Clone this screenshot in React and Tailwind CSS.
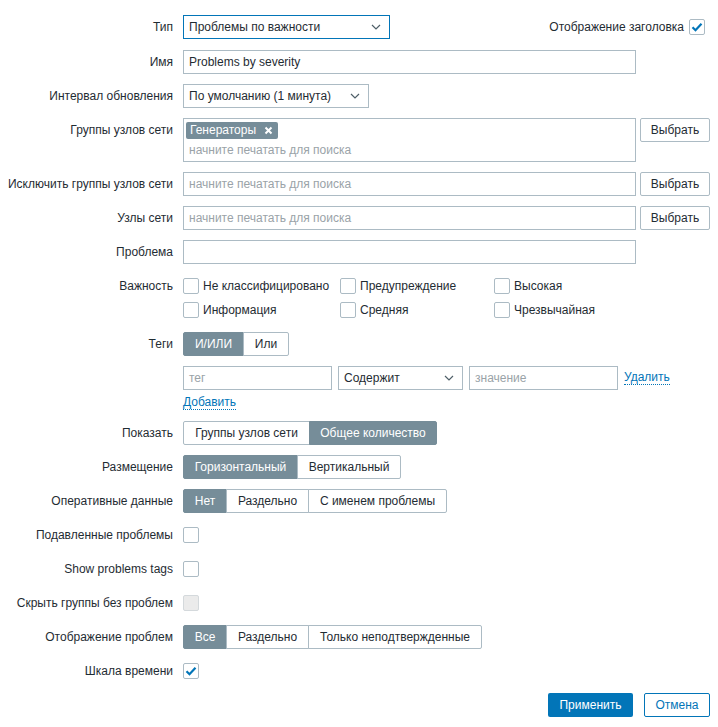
import React from 'react';

const FONT = { fontFamily: '"Liberation Sans", Arial, sans-serif' };

function Chevron() {
  return (
    <svg width="10" height="6" viewBox="0 0 10 6" className="shrink-0">
      <path d="M1 1l4 4 4-4" fill="none" stroke="#4f5f68" strokeWidth="1.2" />
    </svg>
  );
}

function Check() {
  return (
    <svg width="12" height="10" viewBox="0 0 12 10">
      <path d="M1.5 5.2l3 3 6-6.5" fill="none" stroke="#0275b8" strokeWidth="2.2" />
    </svg>
  );
}

function Checkbox({ checked, disabled }) {
  return (
    <span
      className={`w-4 h-4 shrink-0 rounded-[2px] border flex items-center justify-center ${
        disabled ? 'bg-[#ebebeb] border-[#d4d9dc]' : 'bg-white border-[#acbbc4]'
      }`}
    >
      {checked && <Check />}
    </span>
  );
}

function Row({ label, children, top = false, className = '' }) {
  return (
    <div className={`flex ${top ? 'items-start' : 'items-center'} ${className}`}>
      <div className="w-[173px] shrink-0 text-right leading-6 h-6">{label}</div>
      <div className="ml-[10px] flex-1 flex items-center">{children}</div>
    </div>
  );
}

function Select({ value, w }) {
  return (
    <div className={`h-6 ${w} border border-[#acbbc4] bg-white flex items-center justify-between pl-[5px] pr-[8px]`}>
      <span>{value}</span>
      <Chevron />
    </div>
  );
}

function Input({ value, placeholder, w = 'w-[453px]' }) {
  return (
    <div className={`h-6 ${w} border border-[#acbbc4] bg-white flex items-center px-[5px]`}>
      {value ? <span>{value}</span> : <span className="text-[#9aa3a8]">{placeholder}</span>}
    </div>
  );
}

function PickButton() {
  return (
    <div className="ml-1 h-6 w-[70px] border border-[#acbbc4] rounded-[2px] bg-white flex items-center justify-center">
      Выбрать
    </div>
  );
}

function Segments({ items }) {
  return (
    <div className="flex h-6">
      {items.map((it, i) => (
        <div
          key={it.label}
          style={{ width: it.w }}
          className={`flex items-center justify-center border ${
            it.on ? 'bg-[#768d99] border-[#768d99] text-white' : 'bg-white border-[#acbbc4]'
          } ${i === 0 ? 'rounded-l-[2px]' : '-ml-px'} ${i === items.length - 1 ? 'rounded-r-[2px]' : ''}`}
        >
          {it.label}
        </div>
      ))}
    </div>
  );
}

const severities = [
  ['Не классифицировано', 'Предупреждение', 'Высокая'],
  ['Информация', 'Средняя', 'Чрезвычайная'],
];

export default function App() {
  return (
    <div style={FONT} className="w-[718px] h-[727px] bg-white text-[12px] text-[#1f2c33] relative">
      <div className="pt-[15px] flex flex-col">
        <div className="flex items-center">
          <div className="w-[173px] shrink-0 text-right">Тип</div>
          <div className="ml-[10px]">
            <div className="h-6 w-[207px] border border-[#0275b8] bg-white flex items-center justify-between pl-[5px] pr-[8px]">
              <span>Проблемы по важности</span>
              <Chevron />
            </div>
          </div>
          <div className="ml-auto mr-[13px] flex items-center gap-[5px]">
            <span>Отображение заголовка</span>
            <Checkbox checked />
          </div>
        </div>

        <Row label="Имя" className="mt-[11px]">
          <Input value="Problems by severity" />
        </Row>

        <Row label="Интервал обновления" className="mt-[10px]">
          <Select value="По умолчанию (1 минута)" w="w-[186px]" />
        </Row>

        <Row label="Группы узлов сети" top className="mt-[10px]">
          <div className="flex items-start">
            <div className="w-[453px] h-[44px] border border-[#acbbc4] bg-white px-[2px] pt-[2px]">
              <span className="inline-flex items-center h-[17px] bg-[#768d99] text-white rounded-[2px] pl-[4px] pr-[5px] gap-[8px]">
                Генераторы
                <svg width="9" height="9" viewBox="0 0 9 9">
                  <path d="M1.5 1.5l6 6M7.5 1.5l-6 6" stroke="#fff" strokeWidth="2" />
                </svg>
              </span>
              <div className="text-[#9aa3a8] pl-[3px] mt-[2px]">начните печатать для поиска</div>
            </div>
            <PickButton />
          </div>
        </Row>

        <Row label="Исключить группы узлов сети" className="mt-[10px]">
          <Input placeholder="начните печатать для поиска" />
          <PickButton />
        </Row>

        <Row label="Узлы сети" className="mt-[10px]">
          <Input placeholder="начните печатать для поиска" />
          <PickButton />
        </Row>

        <Row label="Проблема" className="mt-[10px]">
          <Input />
        </Row>

        <Row label="Важность" top className="mt-[10px]">
          <div className="flex flex-col">
            {severities.map((line, r) => (
              <div key={r} className="flex h-6 items-center">
                {line.map((s, c) => (
                  <div
                    key={s}
                    className={`flex items-center gap-1 ${c === 0 ? 'w-[157px]' : c === 1 ? 'w-[154px]' : ''}`}
                  >
                    <Checkbox />
                    <span>{s}</span>
                  </div>
                ))}
              </div>
            ))}
          </div>
        </Row>

        <Row label="Теги" className="mt-[10px]">
          <Segments
            items={[
              { label: 'И/ИЛИ', w: 61, on: true },
              { label: 'Или', w: 46 },
            ]}
          />
        </Row>

        <div className="ml-[183px] mt-[10px] flex items-center">
          <Input placeholder="тег" w="w-[149px]" />
          <div className="ml-[6px]">
            <Select value="Содержит" w="w-[125px]" />
          </div>
          <div className="ml-[6px]">
            <Input placeholder="значение" w="w-[149px]" />
          </div>
          <span className="ml-[6px] text-[#0275b8] border-b border-dotted border-[#0275b8] leading-[13px]">Удалить</span>
        </div>
        <div className="ml-[183px] mt-[6px] h-[14px] flex">
          <span className="text-[#0275b8] border-b border-dotted border-[#0275b8] leading-[13px]">Добавить</span>
        </div>

        <Row label="Показать" className="mt-[11px]">
          <Segments
            items={[
              { label: 'Группы узлов сети', w: 127 },
              { label: 'Общее количество', w: 128, on: true },
            ]}
          />
        </Row>

        <Row label="Размещение" className="mt-[10px]">
          <Segments
            items={[
              { label: 'Горизонтальный', w: 115, on: true },
              { label: 'Вертикальный', w: 104 },
            ]}
          />
        </Row>

        <Row label="Оперативные данные" className="mt-[10px]">
          <Segments
            items={[
              { label: 'Нет', w: 44, on: true },
              { label: 'Раздельно', w: 83 },
              { label: 'С именем проблемы', w: 139 },
            ]}
          />
        </Row>

        <Row label="Подавленные проблемы" className="mt-[10px]">
          <Checkbox />
        </Row>

        <Row label="Show problems tags" className="mt-[10px]">
          <Checkbox />
        </Row>

        <Row label="Скрыть группы без проблем" className="mt-[10px]">
          <Checkbox disabled />
        </Row>

        <Row label="Отображение проблем" className="mt-[10px]">
          <Segments
            items={[
              { label: 'Все', w: 44, on: true },
              { label: 'Раздельно', w: 83 },
              { label: 'Только неподтвержденные', w: 174 },
            ]}
          />
        </Row>

        <Row label="Шкала времени" className="mt-[10px]">
          <Checkbox checked />
        </Row>

        <div className="mt-[10px] mr-[8px] flex justify-end gap-[11px]">
          <div className="h-6 w-[85px] rounded-[2px] bg-[#0275b8] text-white flex items-center justify-center">
            Применить
          </div>
          <div className="h-6 w-[66px] rounded-[2px] border border-[#0275b8] text-[#0275b8] bg-white flex items-center justify-center">
            Отмена
          </div>
        </div>
      </div>
    </div>
  );
}
